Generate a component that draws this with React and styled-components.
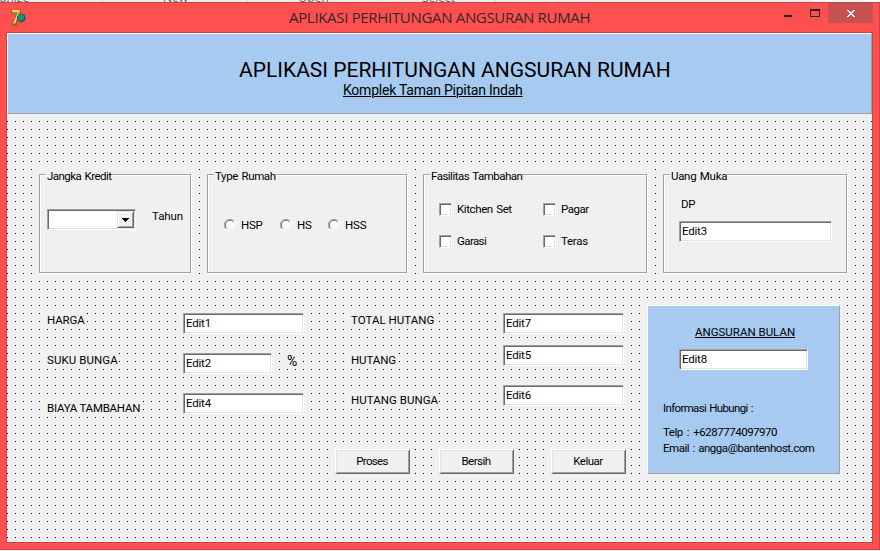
import React from 'react';
import styled, { createGlobalStyle, css } from 'styled-components';

const face = '#f0f0f0';
const blue = '#a6caf0';
const gridDot = "data:image/svg+xml,%3Csvg xmlns='http://www.w3.org/2000/svg' width='8' height='8'%3E%3Crect width='1' height='1'/%3E%3C/svg%3E";

const GlobalStyle = createGlobalStyle`
  *, *::before, *::after { box-sizing: border-box; }
  body {
    margin: 0;
    background: #f3f3f5;
    color: #000;
    font: 11.5px/15px Roboto, "Liberation Sans", sans-serif;
  }
`;

const Screen = styled.div`
  display: flex;
  flex-direction: column;
  width: 880px;
  height: 551px;
  overflow: hidden;
`;

const RibbonStrip = styled.div`
  display: flex;
  flex: none;
  height: 2px;
  overflow: hidden;
  background: #ececee;
`;

const RibbonCell = styled.div`
  flex: none;
  width: ${(p) => p.$w}px;
  height: 2px;
  border-right: 1px solid #d5d5d8;
  padding-left: ${(p) => p.$pad || 0}px;
  overflow: hidden;
  color: #6a6a70;
`;

const RibbonText = styled.span`
  display: block;
  margin-top: -10px;
  margin-left: ${(p) => p.$shift || 0}px;
  font: 12px/15px "Open Sans", sans-serif;
`;

const RibbonEnd = styled.div`
  flex: 1;
  margin-left: 316px;
  background: #fafafa;
`;

const Window = styled.div`
  display: flex;
  flex-direction: column;
  flex: none;
  width: 881px;
  height: 548px;
  margin-left: -1px;
  border: 1px solid #c94444;
  background: #ff5050;
`;

const TitleBar = styled.div`
  display: flex;
  flex: none;
  height: 29px;
`;

const AppIcon = styled.svg`
  flex: none;
  width: 16px;
  height: 17px;
  margin: 6px 0 0 10px;
`;

const Caption = styled.div`
  flex: none;
  width: 302px;
  margin: 4px 0 0 263px;
  color: #33272a;
  font: 15px/20px "Open Sans", sans-serif;
  letter-spacing: -0.32px;
  white-space: nowrap;
`;

const WindowControls = styled.div`
  display: flex;
  margin-left: 184px;
`;

const ControlButton = styled.div`
  width: ${(p) => p.$w}px;
  height: 20px;
  background: ${(p) => (p.$close ? '#c75050' : 'transparent')};
  svg { display: block; width: 100%; height: 20px; }
`;

const Client = styled.div`
  flex: none;
  width: 867px;
  height: 511px;
  margin-left: 6px;
  border: 1px solid #c94444;
  background: ${face} url("${gridDot}") 0 0 / 8px 8px;
`;

const raised = css`
  border: 1px solid;
  border-color: #fff #a0a0a0 #a0a0a0 #fff;
`;

const Banner = styled.header`
  ${raised}
  height: 81px;
  padding: 23px 0 0 231px;
  background: ${blue};
  white-space: nowrap;
`;

const Heading = styled.h1`
  margin: 0;
  font-size: 21px;
  line-height: 26px;
  font-weight: 400;
`;

const SubHeading = styled.div`
  width: max-content;
  margin: -1px 0 0 104px;
  font-size: 14px;
  line-height: 17px;
  letter-spacing: -0.23px;
  text-decoration: underline;
  text-decoration-thickness: 1px;
  text-underline-offset: 1px;
`;

const Groups = styled.section`
  display: flex;
  gap: 15px;
  margin: 55px 0 0 32px;
`;

const Group = styled.div`
  width: ${(p) => p.$w}px;
  height: 105px;
  padding: 5px 1px 1px 0;
  background: ${face};
`;

const GroupFrame = styled.div`
  height: 99px;
  border: 1px solid #a0a0a0;
  box-shadow: 1px 1px 0 #fff, inset 1px 1px 0 #fff;
`;

const Text = styled.span`
  display: block;
  flex: none;
  width: ${(p) => (p.$w ? `${p.$w}px` : 'max-content')};
  height: 13px;
  white-space: nowrap;
  letter-spacing: ${(p) => p.$track || 0}px;
  word-spacing: ${(p) => p.$words || 0}px;
`;

const Legend = styled(Text)`
  margin: -6px 0 0 6px;
  padding-left: 1px;
  background: ${face};
`;

const GroupBody = styled.div`
  display: flex;
  align-items: flex-start;
  padding: ${(p) => p.$pad};
`;

const sunken = css`
  border: 1px solid;
  border-color: #a0a0a0 #fff #fff #a0a0a0;
  box-shadow: inset 1px 1px 0 #696969, inset -1px -1px 0 #e3e3e3;
  background: #fff;
`;

const Edit = styled.div`
  ${sunken}
  flex: none;
  width: ${(p) => p.$w}px;
  height: 21px;
  padding: 2px 0 0 2px;
  letter-spacing: -0.2px;
`;

const Combo = styled.div`
  ${sunken}
  display: flex;
  justify-content: flex-end;
  width: 89px;
  height: 21px;
  padding: 1px;
`;

const ComboButton = styled.div`
  width: 17px;
  height: 17px;
  border: 1px solid;
  border-color: #e3e3e3 #696969 #696969 #e3e3e3;
  box-shadow: inset 1px 1px 0 #fff, inset -1px -1px 0 #a0a0a0;
  background: ${face};
  svg { display: block; width: 15px; height: 15px; }
`;

const Option = styled.div`
  display: flex;
  height: 14px;
  width: ${(p) => p.$w}px;
`;

const RadioMark = styled.svg`
  flex: none;
  width: 12px;
  height: 12px;
  margin: 1px 5px 0 0;
`;

const CheckMark = styled.div`
  ${sunken}
  flex: none;
  width: 13px;
  height: 13px;
  margin: 1px 5px 0 0;
`;

const CheckGrid = styled.div`
  display: grid;
  grid-template-columns: 104px 104px;
  row-gap: 18px;
  padding: 20px 0 0 15px;
`;

const DownPayment = styled.div`
  display: flex;
  flex-direction: column;
  gap: 11px;
  padding: 15px 0 0 15px;
`;

const DownPaymentLabel = styled(Text)`
  margin-left: 2px;
`;

const Lower = styled.section`
  display: flex;
  margin: 31px 0 0 40px;
`;

const Entry = styled.div`
  width: 600px;
  padding-top: 8px;
`;

const Columns = styled.div`
  display: flex;
  height: 136px;
`;

const Column = styled.div`
  display: flex;
  flex-direction: column;
  flex: none;
  width: ${(p) => p.$w}px;
`;

const Slot = styled.div`
  display: flex;
  flex: none;
  height: ${(p) => p.$h}px;
`;

const FieldLabel = styled(Text)`
  background: ${face};
`;

const Percent = styled.span`
  width: 14px;
  height: 16px;
  margin-left: 15px;
  background: ${face};
  font-size: 14px;
  line-height: 16px;
`;

const Buttons = styled.div`
  display: flex;
  margin-left: 288px;
`;

const PushButton = styled.button`
  flex: none;
  width: 75px;
  height: 25px;
  margin: 0 ${(p) => p.$after || 0}px 0 0;
  padding: 0 1px 0 0;
  border: 1px solid;
  border-color: #fff #696969 #696969 #fff;
  box-shadow: inset 1px 1px 0 #e3e3e3, inset -1px -1px 0 #a0a0a0;
  background: ${face};
  color: #000;
  font: inherit;
  letter-spacing: ${(p) => p.$track}px;
`;

const ResultPanel = styled.aside`
  ${raised}
  display: flex;
  flex-direction: column;
  width: 193px;
  height: 169px;
  padding: 19px 0 0 15px;
  background: ${blue};
`;

const ResultTitle = styled(Text)`
  margin: 0 0 11px 32px;
  text-decoration: underline;
  text-decoration-thickness: 1px;
  text-underline-offset: 1px;
`;

const ResultField = styled.div`
  margin: 0 0 31px 16px;
`;

const Contact = styled(Text)`
  margin-bottom: ${(p) => p.$after || 0}px;
`;

const radios = [
  { label: 'HSP', track: -0.3, w: 56 },
  { label: 'HS', track: -0.3, w: 48 },
  { label: 'HSS', track: -0.2, w: 60 },
];

const checks = [
  { label: 'Kitchen Set', track: -0.4 },
  { label: 'Pagar', track: -0.5 },
  { label: 'Garasi', track: -0.6 },
  { label: 'Teras', track: -0.3 },
];

function DelphiIcon() {
  return (
    <AppIcon viewBox="0 0 16 17">
      <path d="M1 0.5h10v3L8 9l-1.500 4.500h1V16.500H1.500v-2.500L3.500 12 6.500 4.500H3L1 5z" fill="#8e6414" />
      <path d="M2 1h8v2L7 8.500 5.500 14.500H2.500L4 12.500 7.500 3.500H2z" fill="#f0c43c" />
      <path d="M2 1.500h6M5 13l2.500-7" stroke="#ffe98a" fill="none" />
      <circle cx="11.200" cy="8.700" r="4.300" fill="#123f6e" />
      <circle cx="11" cy="8.500" r="3.400" fill="#1688b0" />
      <path d="M8.500 6l3-.5 1 2-2 1.500 1 2-2 .5-1.500-2.500zM12.500 8l1.800.5-1 2.500-1.300-.5z" fill="#149a5c" />
    </AppIcon>
  );
}

function Radio({ label, track, w }) {
  return (
    <Option $w={w}>
      <RadioMark viewBox="0 0 12 12">
        <circle cx="6" cy="6" r="5" fill="#fff" />
        <path d="M1.900 10.100A5.600 5.600 0 0 1 10.100 1.900" fill="none" stroke="#a0a0a0" />
        <path d="M2.700 9.300A4.600 4.600 0 0 1 9.300 2.700" fill="none" stroke="#696969" />
        <path d="M10.100 1.900A5.600 5.600 0 0 1 1.900 10.100" fill="none" stroke="#fff" />
        <path d="M9.300 2.700A4.600 4.600 0 0 1 2.700 9.300" fill="none" stroke="#e3e3e3" />
      </RadioMark>
      <Text $track={track}>{label}</Text>
    </Option>
  );
}

function GroupBox({ title, w, legendW, track, children }) {
  return (
    <Group $w={w}>
      <GroupFrame>
        <Legend $w={legendW} $track={track} $words={1}>{title}</Legend>
        {children}
      </GroupFrame>
    </Group>
  );
}

export default function App() {
  return (
    <Screen>
      <GlobalStyle />
      <RibbonStrip>
        <RibbonCell $w={103}><RibbonText $shift={-21}>Organize</RibbonText></RibbonCell>
        <RibbonCell $w={145} $pad={60}><RibbonText>New</RibbonText></RibbonCell>
        <RibbonCell $w={134} $pad={50}><RibbonText>Open</RibbonText></RibbonCell>
        <RibbonCell $w={114} $pad={40}><RibbonText>Select</RibbonText></RibbonCell>
        <RibbonEnd />
      </RibbonStrip>
      <Window>
        <TitleBar>
          <DelphiIcon />
          <Caption>APLIKASI PERHITUNGAN ANGSURAN RUMAH</Caption>
          <WindowControls>
            <ControlButton $w={26}>
              <svg viewBox="0 0 26 20" shapeRendering="crispEdges"><path d="M9 12h8v2H9z" fill="#2b2626" /></svg>
            </ControlButton>
            <ControlButton $w={27}>
              <svg viewBox="0 0 27 20" shapeRendering="crispEdges">
                <path d="M9 6h10v8H9zM10 8v5h8V8z" fill="#2b2626" fillRule="evenodd" />
              </svg>
            </ControlButton>
            <ControlButton $w={45} $close>
              <svg viewBox="0 0 45 20" shapeRendering="crispEdges">
                <path d="M19 7h2v1h1v1h2V8h1V7h2v1h-1v1h-1v1h-1v1h1v1h1v1h1v1h-2v-1h-1v-1h-2v1h-1v1h-2v-1h1v-1h1v-1h1v-1h-1V9h-1V8h-1z" fill="#fff" />
              </svg>
            </ControlButton>
          </WindowControls>
        </TitleBar>
        <Client>
          <Banner>
            <Heading>APLIKASI PERHITUNGAN ANGSURAN RUMAH</Heading>
            <SubHeading>Komplek Taman Pipitan Indah</SubHeading>
          </Banner>
          <Groups>
            <GroupBox title="Jangka Kredit" w={153} legendW={66} track={-0.55}>
              <GroupBody $pad="27px 0 0 7px">
                <Combo>
                  <ComboButton>
                    <svg viewBox="0 0 15 15" shapeRendering="crispEdges"><path d="M4 6h7v1h-1v1H9v1H8v1H7V9H6V8H5V7H4z" fill="#000" /></svg>
                  </ComboButton>
                </Combo>
                <GroupBody $pad="0 0 0 16px"><Text $track={-0.1}>Tahun</Text></GroupBody>
              </GroupBody>
            </GroupBox>
            <GroupBox title="Type Rumah" w={201} legendW={62} track={-0.37}>
              <GroupBody $pad="36px 0 0 16px">
                {radios.map((r) => <Radio key={r.label} {...r} />)}
              </GroupBody>
            </GroupBox>
            <GroupBox title="Fasilitas Tambahan" w={225} legendW={92} track={-0.51}>
              <CheckGrid>
                {checks.map((c) => (
                  <Option key={c.label}>
                    <CheckMark />
                    <Text $track={c.track} $words={1}>{c.label}</Text>
                  </Option>
                ))}
              </CheckGrid>
            </GroupBox>
            <GroupBox title="Uang Muka" w={185} legendW={57} track={-0.3}>
              <DownPayment>
                <DownPaymentLabel $track={-0.3}>DP</DownPaymentLabel>
                <Edit $w={153}>Edit3</Edit>
              </DownPayment>
            </GroupBox>
          </Groups>
          <Lower>
            <Entry>
              <Columns>
                <Column $w={136}>
                  <Slot $h={40}><FieldLabel $track={-0.1}>HARGA</FieldLabel></Slot>
                  <Slot $h={48}><FieldLabel $track={0.08}>SUKU BUNGA</FieldLabel></Slot>
                  <Slot $h={48}><FieldLabel $track={-0.24}>BIAYA TAMBAHAN</FieldLabel></Slot>
                </Column>
                <Column $w={168}>
                  <Slot $h={40}><Edit $w={121}>Edit1</Edit></Slot>
                  <Slot $h={40}><Edit $w={89}>Edit2</Edit><Percent>%</Percent></Slot>
                  <Slot $h={40}><Edit $w={121}>Edit4</Edit></Slot>
                </Column>
                <Column $w={152}>
                  <Slot $h={40}><FieldLabel $track={0.02}>TOTAL HUTANG</FieldLabel></Slot>
                  <Slot $h={40}><FieldLabel $track={-0.1}>HUTANG</FieldLabel></Slot>
                  <Slot $h={40}><FieldLabel $track={0.04}>HUTANG BUNGA</FieldLabel></Slot>
                </Column>
                <Column $w={144}>
                  <Slot $h={32}><Edit $w={121}>Edit7</Edit></Slot>
                  <Slot $h={40}><Edit $w={121}>Edit5</Edit></Slot>
                  <Slot $h={40}><Edit $w={121}>Edit6</Edit></Slot>
                </Column>
              </Columns>
              <Buttons>
                <PushButton $after={29} $track={-0.65}>Proses</PushButton>
                <PushButton $after={37} $track={-0.53}>Bersih</PushButton>
                <PushButton $track={-0.48}>Keluar</PushButton>
              </Buttons>
            </Entry>
            <ResultPanel>
              <ResultTitle $track={0}>ANGSURAN BULAN</ResultTitle>
              <ResultField><Edit $w={129}>Edit8</Edit></ResultField>
              <Contact $after={11} $track={-0.66} $words={1}>Informasi Hubungi :</Contact>
              <Contact $after={3} $track={-0.49} $words={1.8}>Telp : +6287774097970</Contact>
              <Contact $track={-0.47} $words={1}>Email : angga@bantenhost.com</Contact>
            </ResultPanel>
          </Lower>
        </Client>
      </Window>
    </Screen>
  );
}
